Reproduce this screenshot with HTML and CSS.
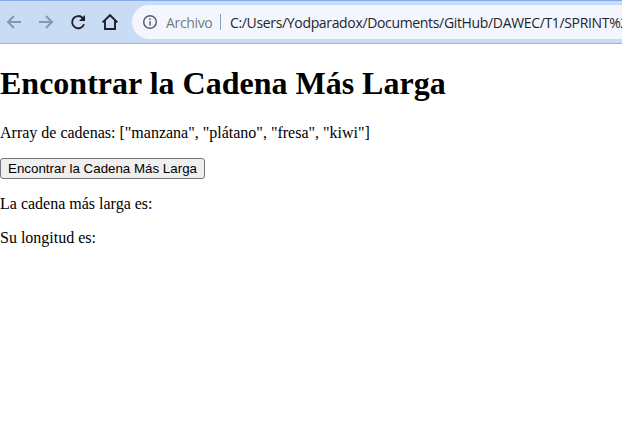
FILE: index.html
```html
<!DOCTYPE html>
<html lang="es">
<head>
<meta charset="utf-8">
<title>Encontrar la Cadena Más Larga</title>
<link rel="stylesheet" href="styles.css">
</head>
<body>
<header class="toolbar">
  <nav class="nav">
    <svg class="icon muted" viewBox="0 0 20 20"><path d="M17 10H4M10 4l-6 6 6 6"/></svg>
    <svg class="icon muted" viewBox="0 0 20 20"><path d="M3 10h13M10 4l6 6-6 6"/></svg>
    <svg class="icon" viewBox="0 0 20 20"><path d="M16 12.200A6.100 6.100 0 1 1 14.700 6L16 7.300"/><path class="solid" d="M17 3v6h-6z"/></svg>
    <svg class="icon home" viewBox="0 0 20 20"><path d="M2.600 10.400 10 3.200l7.400 7.200M5 8.500V17h10V8.500"/></svg>
  </nav>
  <div class="omnibox">
    <svg class="info" viewBox="0 0 16 16"><circle cx="8" cy="8" r="6.300"/><path d="M8 7.200v4.400M8 4.200v1.700"/></svg>
    <span class="scheme">Archivo</span>
    <span class="divider"></span>
    <span class="url">C:/Users/Yodparadox/Documents/GitHub/DAWEC/T1/SPRINT%2</span>
  </div>
</header>
<main class="page">
  <h1>Encontrar la Cadena Más Larga</h1>
  <p>Array de cadenas: ["manzana", "plátano", "fresa", "kiwi"]</p>
  <button class="find" type="button">Encontrar la Cadena Más Larga</button>
  <p>La cadena más larga es:</p>
  <p>Su longitud es:</p>
</main>
</body>
</html>
```
FILE: styles.css
```css
body { margin: 0; background: #fff; color: #000; font: 16px "Liberation Serif", serif; overflow: hidden; }
.toolbar { display: flex; box-sizing: border-box; height: 44px; padding-top: 4px; background: #cadbf5; border-top: 1px solid #83abe9; border-bottom: 1px solid #9fb4cf; }
.nav { display: flex; align-items: center; gap: 12px; height: 34px; padding-left: 4px; width: 128px; box-sizing: border-box; flex: none; }
.icon { width: 20px; height: 20px; flex: none; fill: none; stroke: #211e30; stroke-width: 1.9; }
.muted { stroke: #7f99b1; stroke-width: 2; }
.solid { fill: #211e30; stroke: none; }
.omnibox { display: flex; align-items: center; flex: none; width: 490px; height: 34px; margin-left: 4px; padding-left: 10px; box-sizing: border-box; border-radius: 17px 0 0 17px; background: #f3f7fd; font: 14px "Open Sans", sans-serif; letter-spacing: -0.34px; white-space: nowrap; overflow: hidden; }
.info { flex: none; width: 16px; height: 16px; fill: none; stroke: #5c5a74; stroke-width: 1.5; }
.scheme { flex: none; width: 54px; margin-left: 8px; color: #747b80; }
.divider { flex: none; width: 1px; height: 16px; background: #8ca2bf; }
.url { margin-left: 9px; color: #24242e; }
.page { padding-top: 21px; }
h1 { margin: 0 0 22px; font-size: 32px; line-height: 37px; }
p { margin: 0; line-height: 18px; }
.find { display: block; box-sizing: border-box; width: 205px; height: 21px; margin: 16px 0; padding: 0; border: 1px solid #767676; border-radius: 3px; background: #efefef; color: #000; font: 13.333px "Liberation Sans", sans-serif; }
.find ~ p + p { margin-top: 16px; }
```
